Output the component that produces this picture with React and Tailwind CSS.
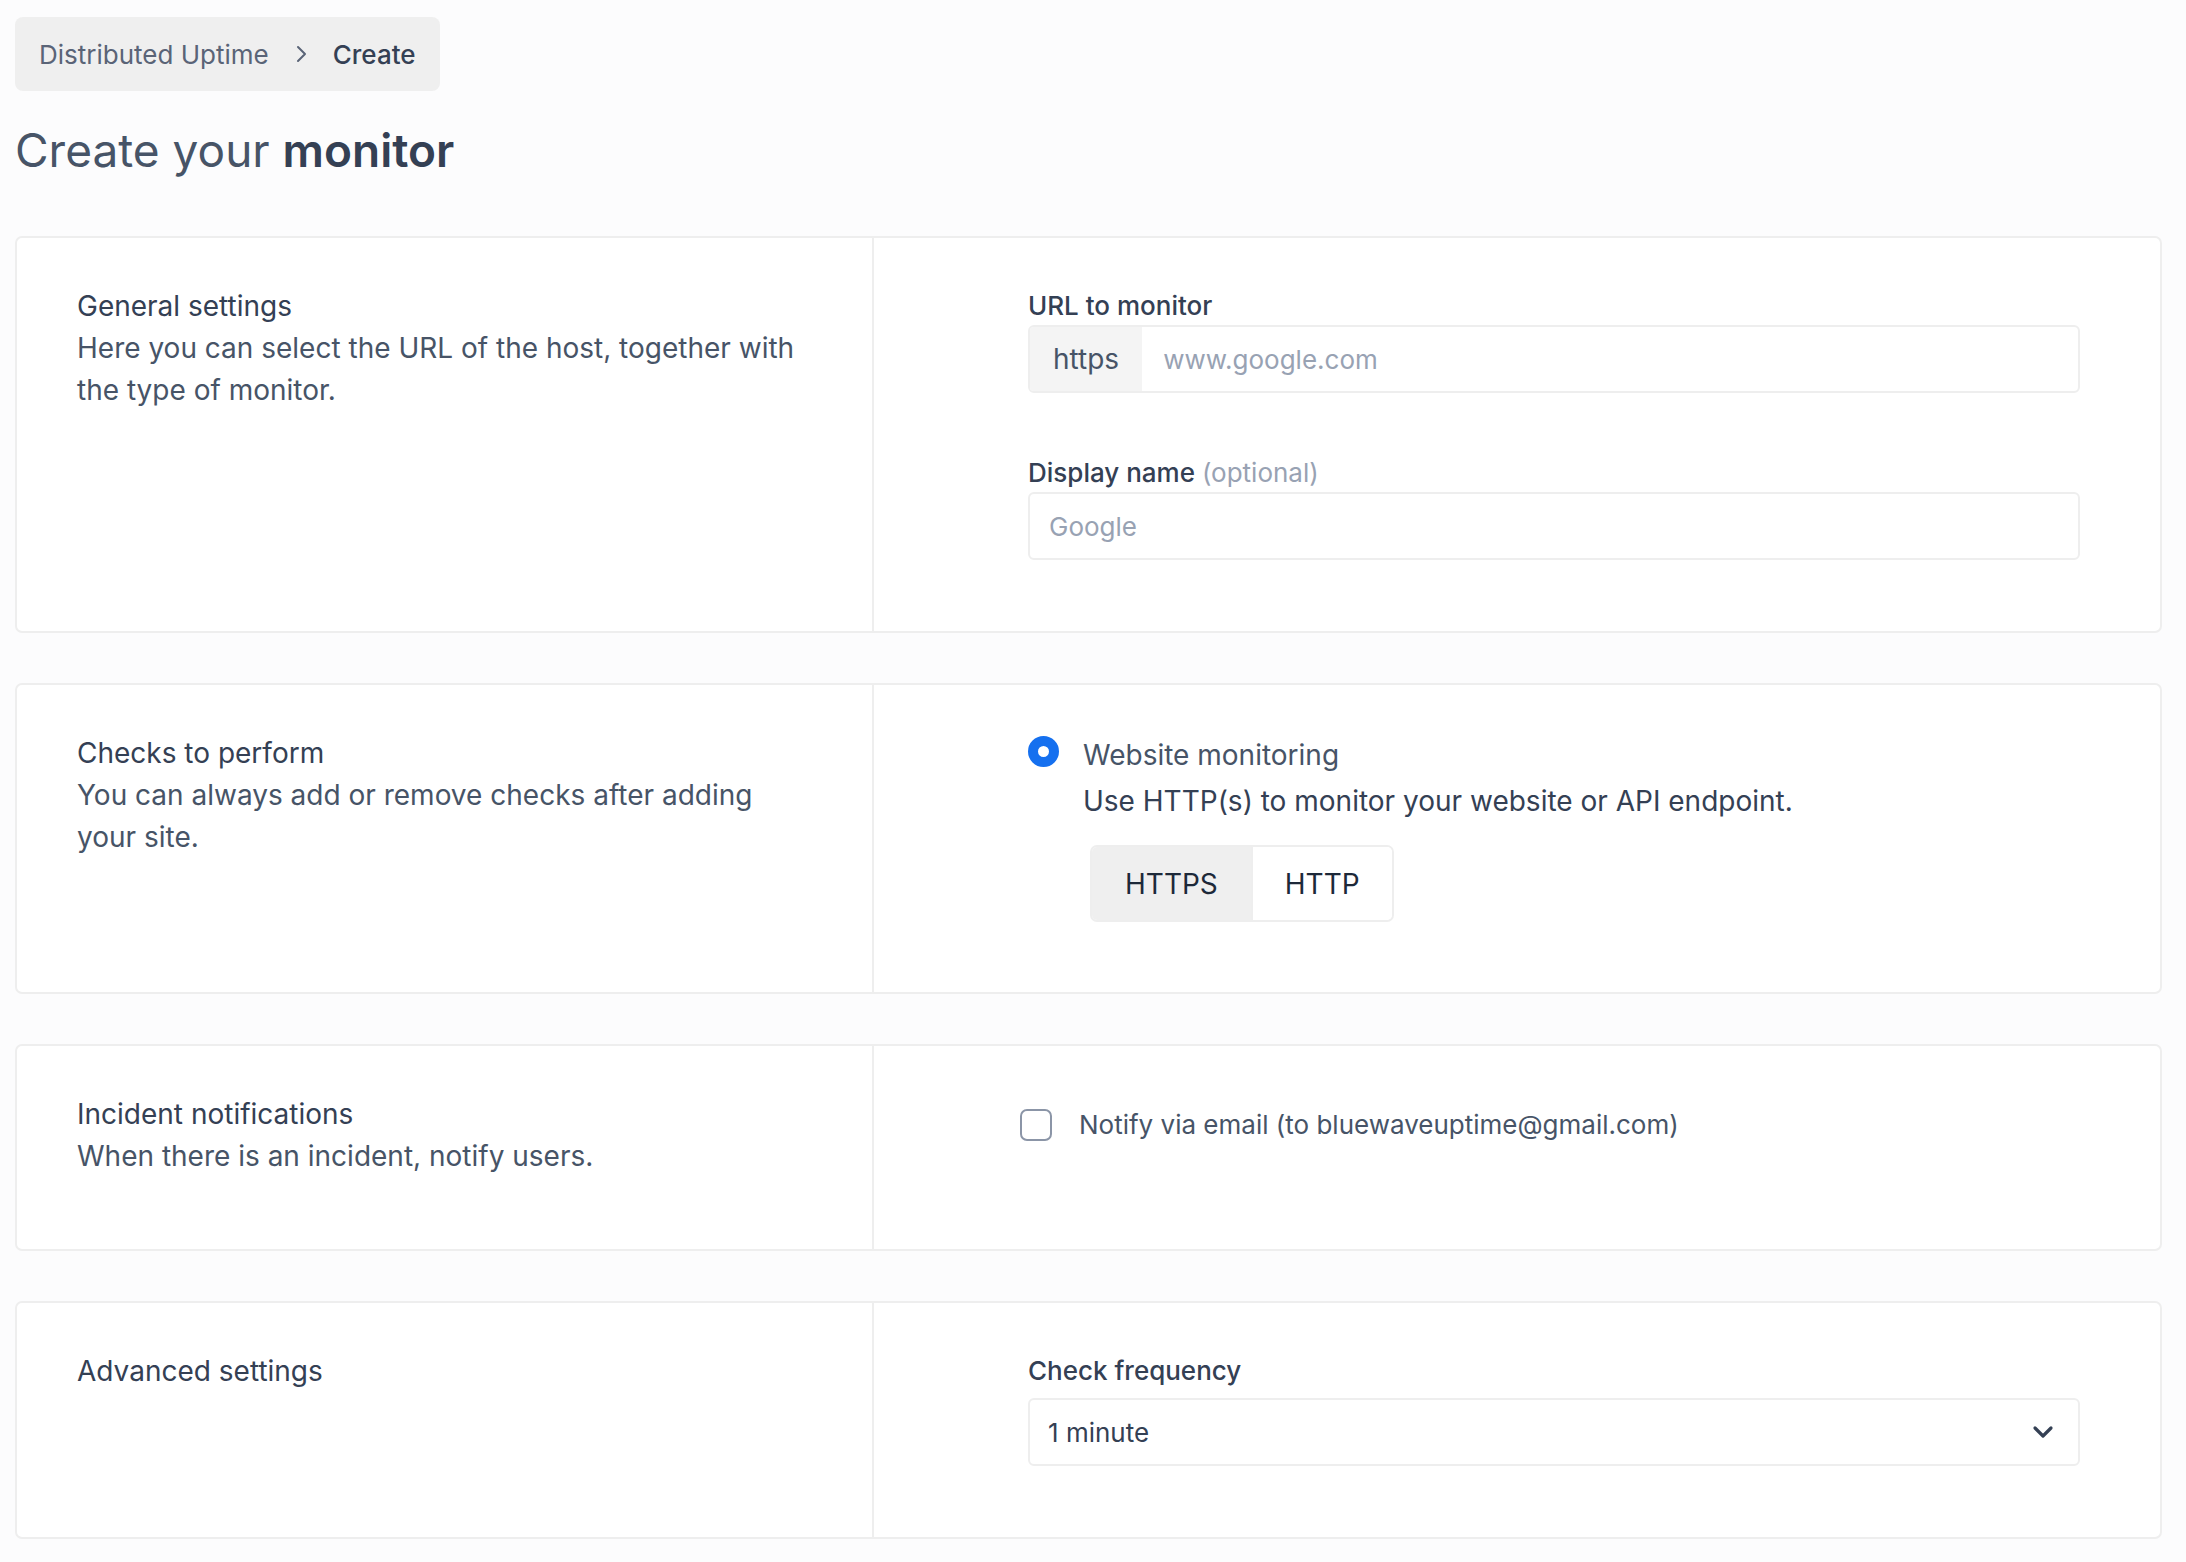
import React, { useState } from "react";

function Card({ left, children, pb = "pb-[70px]" }) {
  return (
    <div className="flex bg-white border-2 border-[#eeeeee] rounded-[7px]">
      <div className="w-[857px] shrink-0 border-r-2 border-[#eeeeee] pl-[60px] pr-[70px] pt-[47px] pb-[72px]">
        {left}
      </div>
      <div className={"flex-1 pl-[154px] pr-[80px] pt-[50px] " + pb}>{children}</div>
    </div>
  );
}

function Label({ children, className = "" }) {
  return (
    <div className={"text-[26px] leading-[36px] font-medium text-[#344054] " + className}>{children}</div>
  );
}

export default function App() {
  const [proto, setProto] = useState("https");
  const [notify, setNotify] = useState(false);

  return (
    <div
      className="min-h-screen bg-[#fcfcfd] pl-[15px] pr-[24px] pt-[17px] pb-[24px] text-[#344054]"
      style={{ fontFamily: "Inter, 'Noto Sans', sans-serif" }}
    >
      {/* breadcrumb */}
      <div className="inline-flex items-center h-[74px] px-[24px] bg-[#efefef] rounded-[8px] text-[26px]">
        <span className="text-[#5a6477]">Distributed Uptime</span>
        <svg className="mx-[24px] w-[16px] h-[18px] text-[#5a6477]" viewBox="0 0 16 18" fill="none">
          <path d="M5 2l7 7-7 7" stroke="currentColor" strokeWidth="2" strokeLinecap="round" strokeLinejoin="round" />
        </svg>
        <span className="font-medium text-[#344054]">Create</span>
      </div>

      <h1 className="mt-[31px] mb-[58px] text-[46px] leading-[56px] text-[#475467]">
        Create your <span className="font-semibold text-[#344054]">monitor</span>
      </h1>

      <div className="flex flex-col gap-[50px]">
        <Card
          pb="pb-[71px]"
          left={
            <div className="text-[28px] leading-[42px]">
              <div className="text-[#344054]">General settings</div>
              <div className="text-[#475467]">
                Here you can select the URL of the host, together with the type of monitor.
              </div>
            </div>
          }
        >
          <Label className="mb-[1px]">URL to monitor</Label>
          <div className="flex h-[68px] border-2 border-[#eeeeee] rounded-[6px] overflow-hidden">
            <div className="flex items-center px-[23px] bg-[#f4f4f4] text-[28px] text-[#475467]">https</div>
            <div className="flex items-center pl-[21px] bg-white text-[26px] text-[#98a2b3]">www.google.com</div>
          </div>

          <Label className="mt-[62px] mb-[1px]">
            Display name <span className="font-normal text-[#98a2b3]">(optional)</span>
          </Label>
          <div className="flex items-center h-[68px] border-2 border-[#eeeeee] rounded-[6px] pl-[19px] bg-white text-[26px] text-[#98a2b3]">
            Google
          </div>
        </Card>

        <Card
          pb="pb-[70px]"
          left={
            <div className="text-[28px] leading-[42px]">
              <div className="text-[#344054]">Checks to perform</div>
              <div className="text-[#475467]">You can always add or remove checks after adding your site.</div>
            </div>
          }
        >
          <div className="-mt-[1px] flex items-start gap-[24px]">
            <div className="mt-[2px] w-[31px] h-[31px] shrink-0 rounded-full border-[10px] border-[#1570ef] bg-white" />
            <div className="text-[28px] leading-[42px]">
              <div className="text-[#475467]">Website monitoring</div>
              <div className="mt-[4px] text-[#344054]">Use HTTP(s) to monitor your website or API endpoint.</div>
              <div className="mt-[23px] ml-[7px] inline-flex h-[77px] border-2 border-[#eeeeee] rounded-[7px] overflow-hidden text-[28px] text-[#1d2939]">
                <button
                  onClick={() => setProto("https")}
                  className={"px-[33px] border-r-2 border-[#eeeeee] " + (proto === "https" ? "bg-[#efefef]" : "bg-white")}
                >
                  HTTPS
                </button>
                <button
                  onClick={() => setProto("http")}
                  className={"px-[32px] " + (proto === "http" ? "bg-[#efefef]" : "bg-white")}
                >
                  HTTP
                </button>
              </div>
            </div>
          </div>
        </Card>

        <Card
          left={
            <div className="text-[28px] leading-[42px]">
              <div className="text-[#344054]">Incident notifications</div>
              <div className="text-[#475467]">When there is an incident, notify users.</div>
            </div>
          }
        >
          <label className="-ml-[8px] mt-[8px] flex items-center gap-[27px] cursor-pointer">
            <span
              onClick={() => setNotify(!notify)}
              className={"w-[32px] h-[32px] rounded-[7px] border-2 " + (notify ? "bg-[#1570ef] border-[#1570ef]" : "bg-white border-[#8b95a7]")}
            />
            <span className="text-[26px] leading-[42px] text-[#475467]">Notify via email (to bluewaveuptime@gmail.com)</span>
          </label>
        </Card>

        <Card
          pb="pb-[71px]"
          left={
            <div className="text-[28px] leading-[42px] text-[#344054]">Advanced settings</div>
          }
        >
          <Label className="mb-[9px]">Check frequency</Label>
          <div className="flex items-center justify-between h-[68px] border-2 border-[#eeeeee] rounded-[6px] pl-[18px] pr-[24px] bg-white text-[26px] text-[#344054]">
            <span>1 minute</span>
            <svg className="w-[22px] h-[14px]" viewBox="0 0 22 14" fill="none">
              <path d="M3 3l8 8 8-8" stroke="#344054" strokeWidth="3.2" strokeLinecap="round" strokeLinejoin="round" />
            </svg>
          </div>
        </Card>
      </div>
    </div>
  );
}
